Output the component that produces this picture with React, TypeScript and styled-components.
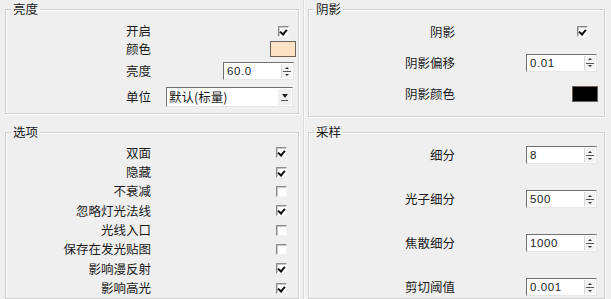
import React from 'react';
import styled, { createGlobalStyle } from 'styled-components';

const GlobalStyle = createGlobalStyle`
  html, body {
    margin: 0;
    padding: 0;
    background: #efefef;
    overflow: hidden;
  }
  body {
    font-family: "Noto Sans CJK SC", "Liberation Sans", sans-serif;
    color: #1a1a1a;
  }
`;

const Panel = styled.div`
  width: 611px;
  height: 299px;
  box-sizing: border-box;
  padding: 2px 0 0 5px;
  display: grid;
  grid-template-columns: 294px 9px 297px;
  grid-template-rows: 115px 1fr;
  row-gap: 8px;
  align-items: start;
  overflow: hidden;
`;

const Separator = styled.div`
  grid-column: 2;
  grid-row: 1 / 3;
  align-self: stretch;
  justify-self: center;
  width: 1px;
  margin-top: -2px;
  background: #dcdcdc;
  box-shadow: 1px 0 0 #fafafa;
`;

const Group = styled.fieldset<{ $bottom?: number }>`
  margin: 0;
  padding: 0 0 ${(p) => p.$bottom ?? 0}px 0;
  border: 1px solid #cfcfcf;
  box-shadow: inset 1px 1px 0 #fbfbfb, 1px 1px 0 #fbfbfb;
  min-width: 0;
`;

const Legend = styled.legend`
  margin-left: 5px;
  padding: 0 2px;
  font-size: 12.5px;
  line-height: 14px;
  color: #1a1a1a;
`;

const Body = styled.div<{ $top: number; $gap?: number }>`
  display: flex;
  flex-direction: column;
  padding-top: ${(p) => p.$top}px;
  gap: ${(p) => p.$gap ?? 0}px;
`;

const Row = styled.div<{ $h: number; $label: number }>`
  height: ${(p) => p.$h}px;
  display: grid;
  grid-template-columns: ${(p) => p.$label}px 1fr;
  align-items: center;
`;

const Label = styled.span`
  text-align: right;
  font-size: 12.5px;
  line-height: 14px;
  white-space: nowrap;
`;

const Check = styled.span<{ $on: boolean; $right: number }>`
  justify-self: end;
  margin-right: ${(p) => p.$right}px;
  width: 11px;
  height: 11px;
  box-sizing: border-box;
  background: #fff;
  border-top: 1px solid #8a8a8a;
  border-left: 1px solid #8a8a8a;
  border-right: 1px solid #f4f4f4;
  border-bottom: 1px solid #f4f4f4;
  box-shadow: inset 1px 1px 0 #c9c9c9;
  position: relative;
  &::after {
    content: '';
    display: ${(p) => (p.$on ? 'block' : 'none')};
    position: absolute;
    left: 2px;
    top: 1px;
    width: 3px;
    height: 5px;
    border-right: 2px solid #111;
    border-bottom: 2px solid #111;
    transform: rotate(40deg);
  }
`;

const Swatch = styled.span<{ $color: string; $right: number }>`
  justify-self: end;
  margin-right: ${(p) => p.$right}px;
  width: 26px;
  height: 16px;
  box-sizing: border-box;
  background: ${(p) => p.$color};
  border: 1px solid #6c6259;
`;

const SpinBox = styled.div<{ $right: number; $w?: number }>`
  justify-self: end;
  margin-right: ${(p) => p.$right}px;
  width: ${(p) => p.$w ?? 71}px;
  height: 18px;
  box-sizing: border-box;
  display: flex;
  background: #fff;
  border-top: 1px solid #6f6f6f;
  border-left: 1px solid #6f6f6f;
  border-right: 1px solid #e6e6e6;
  border-bottom: 1px solid #e6e6e6;
`;

const SpinValue = styled.span`
  flex: 1;
  padding-left: 3px;
  font-family: "Liberation Sans", sans-serif;
  font-size: 11.5px;
  line-height: 16px;
  letter-spacing: 0.6px;
  color: #222;
`;

const SpinButtons = styled.div`
  width: 10px;
  margin: 1px 1px 1px 0;
  background: #f3f3f3;
  border-left: 1px solid #d6d6d6;
  display: flex;
  flex-direction: column;
  align-items: center;
  justify-content: space-around;
  position: relative;
  &::before {
    content: '';
    position: absolute;
    left: 1px;
    right: 1px;
    top: 50%;
    height: 1px;
    background: #555;
  }
`;

const Arrow = styled.span<{ $up?: boolean }>`
  width: 0;
  height: 0;
  border-left: 2px solid transparent;
  border-right: 2px solid transparent;
  ${(p) => (p.$up ? 'border-bottom: 2px solid #333;' : 'border-top: 2px solid #333;')}
`;

const Select = styled.div`
  justify-self: end;
  margin-right: 5px;
  width: 127px;
  height: 20px;
  box-sizing: border-box;
  display: flex;
  background: #fff;
  border-top: 1px solid #6f6f6f;
  border-left: 1px solid #6f6f6f;
  border-right: 1px solid #e6e6e6;
  border-bottom: 1px solid #e6e6e6;
`;

const SelectText = styled.span`
  flex: 1;
  padding-left: 2px;
  font-size: 12.5px;
  line-height: 18px;
`;

const SelectButton = styled.span`
  width: 13px;
  margin: 1px;
  background: #f0f0f0;
  display: flex;
  flex-direction: column;
  align-items: center;
  justify-content: center;
  gap: 2px;
  &::before {
    content: '';
    border-left: 3px solid transparent;
    border-right: 3px solid transparent;
    border-top: 4px solid #222;
  }
  &::after {
    content: '';
    width: 7px;
    height: 1px;
    background: #555;
  }
`;

const Spinner: React.FC<{ value: string; right: number }> = ({ value, right }) => (
  <SpinBox $right={right}>
    <SpinValue>{value}</SpinValue>
    <SpinButtons>
      <Arrow $up />
      <Arrow />
    </SpinButtons>
  </SpinBox>
);

const options: [string, boolean][] = [
  ['双面', true],
  ['隐藏', true],
  ['不衰减', false],
  ['忽略灯光法线', true],
  ['光线入口', false],
  ['保存在发光贴图', false],
  ['影响漫反射', true],
  ['影响高光', true],
];

const sampling = [
  ['细分', '8'],
  ['光子细分', '500'],
  ['焦散细分', '1000'],
  ['剪切阈值', '0.001'],
];

export default function App() {
  return (
    <>
      <GlobalStyle />
      <Panel>
        <Group $bottom={3} style={{ gridColumn: 1, gridRow: 1 }}>
          <Legend>亮度</Legend>
          <Body $top={6}>
            <Row $h={18} $label={145}>
              <Label>开启</Label>
              <Check $on $right={9} />
            </Row>
            <Row $h={18} $label={145}>
              <Label>颜色</Label>
              <Swatch $color="#fde2c6" $right={2} />
            </Row>
            <Row $h={26} $label={145}>
              <Label>亮度</Label>
              <Spinner value="60.0" right={4} />
            </Row>
            <Row $h={26} $label={145}>
              <Label>单位</Label>
              <Select>
                <SelectText>默认(标量)</SelectText>
                <SelectButton />
              </Select>
            </Row>
          </Body>
        </Group>

        <Separator />

        <Group $bottom={7} style={{ gridColumn: 3, gridRow: 1 }}>
          <Legend>阴影</Legend>
          <Body $top={0}>
            <Row $h={31} $label={146}>
              <Label>阴影</Label>
              <Check $on $right={16} />
            </Row>
            <Row $h={31} $label={146}>
              <Label>阴影偏移</Label>
              <Spinner value="0.01" right={7} />
            </Row>
            <Row $h={31} $label={146}>
              <Label>阴影颜色</Label>
              <Swatch $color="#000" $right={6} />
            </Row>
          </Body>
        </Group>

        <Group style={{ gridColumn: 1, gridRow: 2 }}>
          <Legend>选项</Legend>
          <Body $top={4}>
            {options.map(([name, on]) => (
              <Row key={name} $h={19.35} $label={145}>
                <Label>{name}</Label>
                <Check $on={on} $right={11} />
              </Row>
            ))}
          </Body>
        </Group>

        <Group style={{ gridColumn: 3, gridRow: 2 }}>
          <Legend>采样</Legend>
          <Body $top={5} $gap={22}>
            {sampling.map(([name, value]) => (
              <Row key={name} $h={22} $label={146}>
                <Label>{name}</Label>
                <Spinner value={value} right={7} />
              </Row>
            ))}
          </Body>
        </Group>
      </Panel>
    </>
  );
}
